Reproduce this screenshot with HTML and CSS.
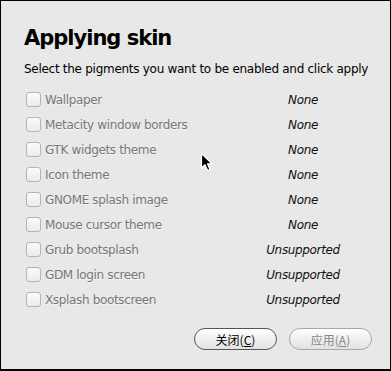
FILE: index.html
```html
<!DOCTYPE html>
<html>
<head>
<meta charset="utf-8">
<link rel="stylesheet" href="styles.css">
</head>
<body>
<div class="window">
  <h1 class="title">Applying skin</h1>
  <p class="subtitle">Select the pigments you want to be enabled and click apply</p>
  <div class="list">
    <div class="row"><label class="item"><span class="box"></span><span class="label">Wallpaper</span></label><span class="value">None</span></div>
    <div class="row"><label class="item"><span class="box"></span><span class="label">Metacity window borders</span></label><span class="value">None</span></div>
    <div class="row"><label class="item"><span class="box"></span><span class="label">GTK widgets theme</span></label><span class="value">None</span></div>
    <div class="row"><label class="item"><span class="box"></span><span class="label">Icon theme</span></label><span class="value">None</span></div>
    <div class="row"><label class="item"><span class="box"></span><span class="label">GNOME splash image</span></label><span class="value">None</span></div>
    <div class="row"><label class="item"><span class="box"></span><span class="label">Mouse cursor theme</span></label><span class="value">None</span></div>
    <div class="row"><label class="item"><span class="box"></span><span class="label">Grub bootsplash</span></label><span class="value">Unsupported</span></div>
    <div class="row"><label class="item"><span class="box"></span><span class="label">GDM login screen</span></label><span class="value">Unsupported</span></div>
    <div class="row"><label class="item"><span class="box"></span><span class="label">Xsplash bootscreen</span></label><span class="value">Unsupported</span></div>
  </div>
  <div class="buttons">
    <button class="btn">关闭(<u>C</u>)</button>
    <button class="btn disabled">应用(<u>A</u>)</button>
  </div>
  <svg class="cursor" width="16" height="22" viewBox="0 0 16 22">
    <path d="M1.5 1.5 L1.5 16 L5 12.8 L7.6 18.6 L10 17.5 L7.5 11.8 L12 11.8 Z" fill="#000" stroke="#fff" stroke-width="1.2" stroke-linejoin="round"/>
  </svg>
</div>
</body>
</html>
```
FILE: styles.css
```css
html, body {
  margin: 0;
  padding: 0;
  background: #e8e8e8;
}
.window {
  position: relative;
  width: 391px;
  height: 371px;
  box-sizing: border-box;
  border: 1px solid #000;
  border-bottom-width: 2px;
  background: #e8e8e8;
  font-family: "DejaVu Sans", "Noto Sans CJK SC", sans-serif;
  color: #000;
  overflow: hidden;
}
.title {
  margin: 24px 0 0 23px;
  font-size: 21px;
  line-height: 26px;
  font-weight: bold;
  letter-spacing: -1px;
}
.subtitle {
  margin: 11px 0 0 23px;
  font-size: 12px;
  line-height: 15px;
  letter-spacing: -0.28px;
}
.list {
  margin-top: 10px;
  padding: 0 37px 0 25px;
}
.row {
  display: grid;
  grid-template-columns: 1fr 100px;
  align-items: center;
  height: 25px;
}
.item {
  display: flex;
  align-items: center;
  gap: 4px;
}
.box {
  width: 13px;
  height: 13px;
  border: 1px solid #b4b4b4;
  border-radius: 3px;
  background: linear-gradient(#fafafa, #ececec);
}
.label {
  font-size: 12px;
  letter-spacing: -0.35px;
  color: #777;
  text-shadow: 0 1px 0 rgba(255,255,255,0.6);
}
.value {
  text-align: center;
  font-size: 12px;
  letter-spacing: -0.35px;
  font-style: italic;
  color: #111;
}
.buttons {
  position: absolute;
  left: 0;
  right: 0;
  bottom: 19px;
  display: flex;
  justify-content: flex-end;
  gap: 12px;
  padding-right: 18px;
}
.btn {
  width: 83px;
  height: 22px;
  border: 1px solid #555;
  border-radius: 11px;
  background: linear-gradient(#ffffff, #f0f0f0 50%, #e2e2e2);
  font-family: "Noto Sans CJK SC", "DejaVu Sans", sans-serif;
  font-size: 12px;
  color: #000;
  padding: 0;
}
.btn.disabled {
  border-color: #a8a8a8;
  color: #888;
}
.cursor {
  position: absolute;
  left: 199px;
  top: 151px;
}
```
